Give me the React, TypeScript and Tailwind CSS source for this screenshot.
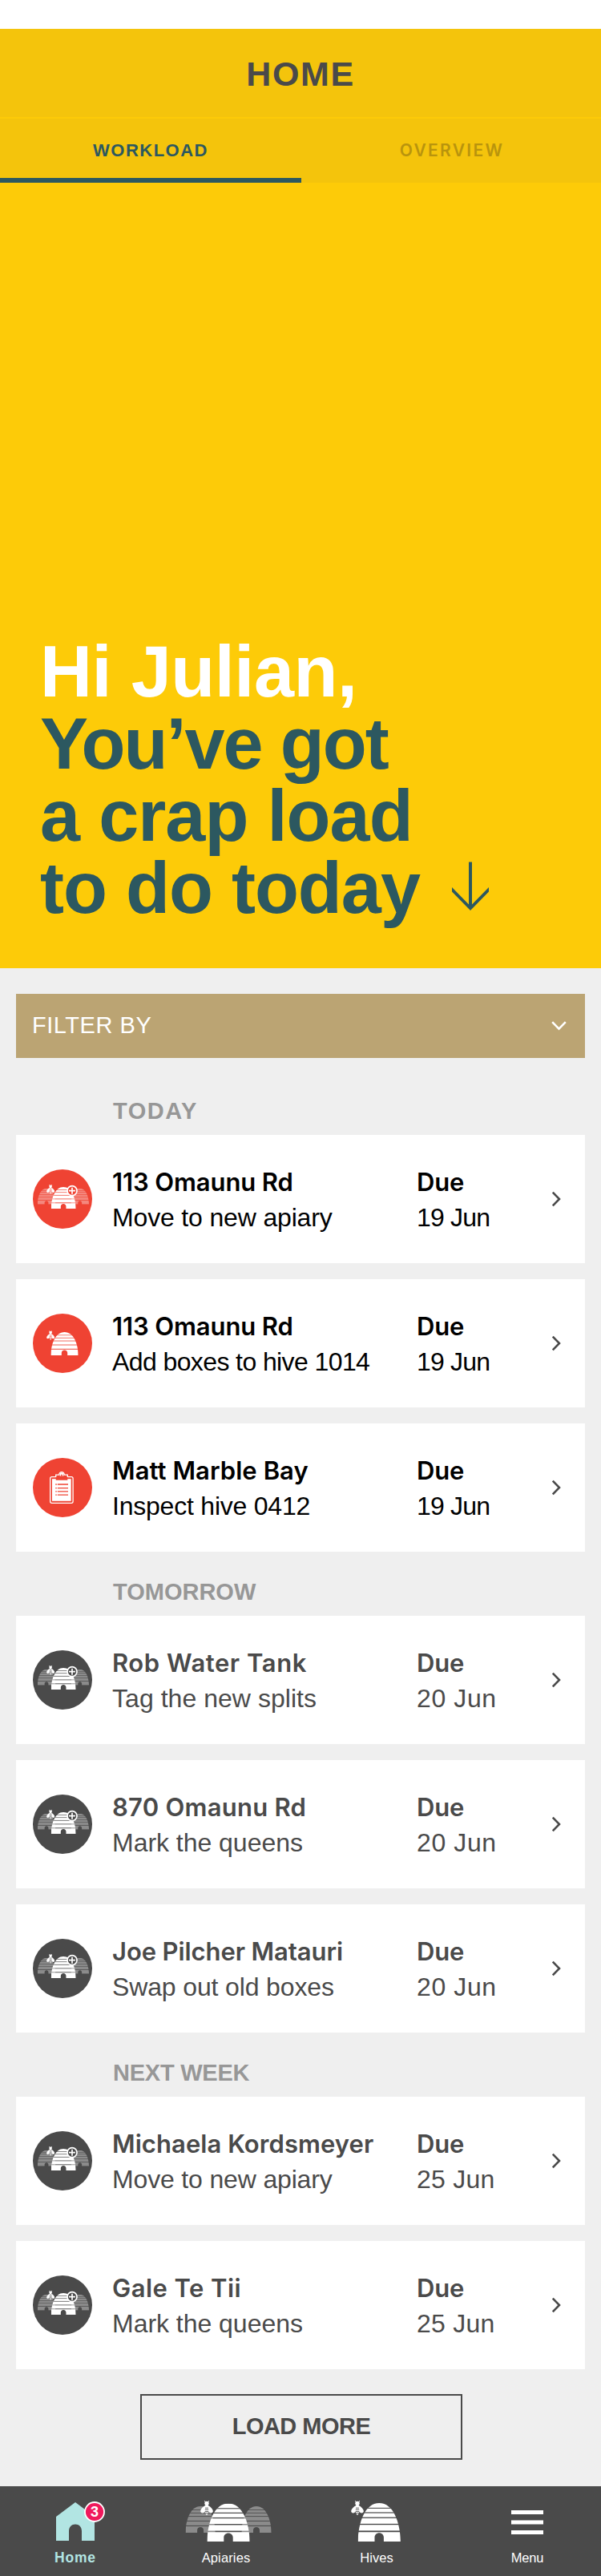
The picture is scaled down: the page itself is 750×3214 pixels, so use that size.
import React, { useId } from 'react';

type IconKind = 'apiary' | 'hive' | 'clipboard';

type Task = {
  title: string;
  titleTracking: string;
  note: string;
  noteTracking: string;
  date: string;
  dateTracking: string;
  icon: IconKind;
};

type Section = { label: string; tracking: string; urgent: boolean; tasks: Task[] };

const sections: Section[] = [
  {
    label: 'TODAY',
    tracking: 'tracking-[1.5px]',
    urgent: true,
    tasks: [
      { title: '113 Omaunu Rd', titleTracking: 'tracking-[-0.11px]', note: 'Move to new apiary', noteTracking: 'tracking-[-0.16px]', date: '19 Jun', dateTracking: 'tracking-[-0.8px]', icon: 'apiary' },
      { title: '113 Omaunu Rd', titleTracking: 'tracking-[-0.11px]', note: 'Add boxes to hive 1014', noteTracking: 'tracking-[-0.6px]', date: '19 Jun', dateTracking: 'tracking-[-0.8px]', icon: 'hive' },
      { title: 'Matt Marble Bay', titleTracking: 'tracking-[0.06px]', note: 'Inspect hive 0412', noteTracking: 'tracking-[-0.22px]', date: '19 Jun', dateTracking: 'tracking-[-0.8px]', icon: 'clipboard' },
    ],
  },
  {
    label: 'TOMORROW',
    tracking: 'tracking-[0px]',
    urgent: false,
    tasks: [
      { title: 'Rob Water Tank', titleTracking: 'tracking-[0.54px]', note: 'Tag the new splits', noteTracking: 'tracking-[0.04px]', date: '20 Jun', dateTracking: 'tracking-[0.6px]', icon: 'apiary' },
      { title: '870 Omaunu Rd', titleTracking: 'tracking-[0.24px]', note: 'Mark the queens', noteTracking: 'tracking-[-0.03px]', date: '20 Jun', dateTracking: 'tracking-[0.6px]', icon: 'apiary' },
      { title: 'Joe Pilcher Matauri', titleTracking: 'tracking-[-0.09px]', note: 'Swap out old boxes', noteTracking: 'tracking-[-0.14px]', date: '20 Jun', dateTracking: 'tracking-[0.6px]', icon: 'apiary' },
    ],
  },
  {
    label: 'NEXT WEEK',
    tracking: 'tracking-[-0.24px]',
    urgent: false,
    tasks: [
      { title: 'Michaela Kordsmeyer', titleTracking: 'tracking-[0.07px]', note: 'Move to new apiary', noteTracking: 'tracking-[-0.16px]', date: '25 Jun', dateTracking: 'tracking-[0.24px]', icon: 'apiary' },
      { title: 'Gale Te Tii', titleTracking: 'tracking-[0.45px]', note: 'Mark the queens', noteTracking: 'tracking-[-0.03px]', date: '25 Jun', dateTracking: 'tracking-[0.24px]', icon: 'apiary' },
    ],
  },
];

/* Straw skep with horizontal bands, 53.4 x 48 in its own units. */
function Hive({ x, y, sx, sy, opacity = 1 }: { x: number; y: number; sx: number; sy: number; opacity?: number }) {
  const id = useId();
  return (
    <g transform={`translate(${x} ${y}) scale(${sx} ${sy})`} fill="#fff" opacity={opacity}>
      <clipPath id={id}>
        <path d="M0 48C.6 24 9 0 26.7 0S52.8 24 53.4 48Z" />
      </clipPath>
      <g clipPath={`url(#${id})`}>
        <rect width="53.4" height="5.8" />
        <rect y="6.9" width="53.4" height="4.5" />
        <rect y="12.6" width="53.4" height="5" />
        <rect y="18.9" width="53.4" height="6.9" />
        <rect y="27.2" width="53.4" height="7.2" />
        <path d="M0 36.2H53.4V48H32.4V43C32.4 39.6 30 37.3 26.7 37.3S21 39.6 21 43V48H0Z" />
      </g>
    </g>
  );
}

/* Bee seen from above, 16 x 18 in its own units. */
function Bee({ x, y, scale = 1, bg }: { x: number; y: number; scale?: number; bg: string }) {
  return (
    <g transform={`translate(${x} ${y}) scale(${scale})`} fill="#fff">
      <path d="M5 .4 6.6 1.6M11 .4 9.4 1.6" stroke="#fff" strokeWidth="1" />
      <path d="M5.8 1.2Q8 .2 10.2 1.2L10.8 3.6Q10.6 5 9.8 5.6L10 7H6L6.2 5.6Q5.4 5 5.2 3.6Z" />
      <path d="M6.2 6C3 7.5 0 11 .2 13.6C.8 16.2 4.8 16.2 6.4 12.8Z" />
      <path d="M9.8 6C13 7.5 16 11 15.8 13.6C15.2 16.2 11.2 16.2 9.6 12.8Z" />
      <path d="M6 7H10L10.4 13.5Q10 17 8 18.2Q6 17 5.6 13.5Z" />
      <path d="M6 9.2H10M5.8 11.4H10.2M5.8 13.6H10.2M6 15.7H10" stroke={bg} strokeWidth=".9" />
    </g>
  );
}

function TaskIcon({ kind, urgent }: { kind: IconKind; urgent: boolean }) {
  const bg = urgent ? '#ef4333' : '#4a4a4a';
  return (
    <svg width="74" height="74" viewBox="0 0 74 74" className="shrink-0">
      <circle cx="37" cy="37" r="37" fill={bg} />
      {kind === 'apiary' && (
        <>
          <Hive x={5.7} y={23.7} sx={0.424} sy={0.417} opacity={0.36} />
          <Hive x={47.4} y={23.7} sx={0.424} sy={0.417} opacity={0.36} />
          <Hive x={22.6} y={22} sx={0.582} sy={0.5625} />
          <Bee x={17} y={19} scale={0.64} bg={bg} />
          <circle cx="49" cy="26.7" r="6" fill={bg} stroke="#fff" strokeWidth="1.7" />
          <path d="M49 22.7V30.7M45 26.7H53" stroke="#fff" strokeWidth="1.7" />
        </>
      )}
      {kind === 'hive' && (
        <>
          <Hive x={22.3} y={23} sx={0.644} sy={0.604} />
          <Bee x={17} y={21.3} scale={0.64} bg={bg} />
        </>
      )}
      {kind === 'clipboard' && (
        <>
          <rect x="21.7" y="23.7" width="28.4" height="32.6" rx="2" fill="none" stroke="#fff" strokeWidth="1.3" />
          <rect x="24" y="26.2" width="23.7" height="27.6" fill="#fff" />
          <path d="M28.7 27.7V21.2H32.6Q33.2 17.6 36 17.6T39.4 21.2H43.3V27.7Z" fill={bg} />
          <path
            d="M28.7 24V21.2H32.6Q33.2 17.6 36 17.6T39.4 21.2H43.3V24"
            fill="none"
            stroke="#fff"
            strokeWidth="1.3"
          />
          <path d="M33.6 22.6Q33.2 18.2 36 18.2T38.4 22.6Z" fill="#fff" />
          <rect x="35.2" y="20.7" width="1.6" height="2" fill={bg} />
          <path
            d="M28.2 33H29.8M30.8 33H44M28.2 37.6H29.8M30.8 37.6H44M28.2 41.9H29.8M30.8 41.9H44M28.2 46.1H29.8M30.8 46.1H44"
            stroke={bg}
            strokeWidth="1.3"
          />
        </>
      )}
    </svg>
  );
}

function TaskCard({ task, urgent }: { task: Task; urgent: boolean }) {
  return (
    <li className={`flex h-40 items-center bg-white pl-[21px] pr-[30px] leading-[44px] ${urgent ? 'text-black' : 'text-[#4a4a4a]'}`}>
      <TaskIcon kind={task.icon} urgent={urgent} />
      <div className="ml-[25px] w-[380px] pt-[2px] whitespace-nowrap">
        <h3 className={`font-['Inter',sans-serif] text-[31px] font-semibold ${task.titleTracking}`}>{task.title}</h3>
        <p className={`text-[32px] ${task.noteTracking}`}>{task.note}</p>
      </div>
      <div className="pt-[2px] whitespace-nowrap">
        <p className="font-['Inter',sans-serif] text-[31px] font-semibold tracking-[-0.2px]">Due</p>
        <p className={`text-[32px] ${task.dateTracking}`}>{task.date}</p>
      </div>
      <svg width="12" height="20" viewBox="0 0 12 20" className="ml-auto" fill="none" stroke="#4a4a4a" strokeWidth="2.6">
        <path d="M1.8 1.6 10 10 1.8 18.4" />
      </svg>
    </li>
  );
}

function NavItem({ label, active, children }: { label: React.ReactNode; active?: boolean; children: React.ReactNode }) {
  return (
    <a className={`flex w-[188px] shrink-0 flex-col items-center pt-[10px] ${active ? 'text-[#b2e5e3]' : 'text-white'}`}>
      <svg width="188" height="64" viewBox="0 0 188 64">
        {children}
      </svg>
      {label}
    </a>
  );
}

export default function App() {
  return (
    <div className="w-[750px] bg-[#efefef] font-['Liberation_Sans',Arial,sans-serif]">
      <div className="h-9 bg-white" />
      <header className="flex h-[110px] items-center justify-center bg-[#f4c40c] pt-[3px]">
        <h1 className="text-[43px] font-bold tracking-[1.6px] text-[#4a4a4a]">HOME</h1>
      </header>
      <nav className="flex h-[82px] border-t-2 border-[#fdcb08] bg-[#f4c40c] text-center leading-[68px]">
        <a className="w-[376px] border-b-[6px] border-[#2c5860] pt-[6px] text-[22px] font-bold tracking-[1.5px] text-[#2c5860]">WORKLOAD</a>
        <a className="flex-1 pt-[6px] pl-[2px] font-['Inter',sans-serif] text-[21px] font-semibold tracking-[2.3px] text-[#b9940d]">OVERVIEW</a>
      </nav>
      <section className="flex h-[980px] flex-col justify-end bg-[#fdcb08] px-[50px] pb-[55px] text-[90px] font-bold leading-[90px] text-[#2c5860]">
        <p className="tracking-[-0.45px] text-white">Hi Julian,</p>
        <p className="tracking-[-1.95px]">You’ve got</p>
        <p className="tracking-[-0.95px]">a crap load</p>
        <div className="flex whitespace-nowrap">
          <span className="w-[513px] tracking-[-1px]">to do today</span>
          <svg width="48" height="62" viewBox="0 0 48 62" className="mt-[12px]" fill="#2c5860">
            <path d="M22 .5h4V56h-4z" />
            <path d="M1 32 24 55.5 47 32V37.5L24 61 1 37.5Z" />
          </svg>
        </div>
      </section>
      <main className="flex flex-col px-5 pt-8">
        <button className="mb-4 flex h-20 items-center justify-between bg-[#bba473] pl-[20px] pr-[23px] text-[29px] tracking-[0.54px] text-white">
          FILTER BY
          <svg width="19" height="12" viewBox="0 0 19 12" fill="none" stroke="#fff" strokeWidth="2.6" className="-mt-[1px]">
            <path d="M1.2 1.2 9.5 9.6 17.8 1.2" />
          </svg>
        </button>
        {sections.map((s) => (
          <section key={s.label}>
            <h2 className={`h-20 pl-[121px] pt-[30px] text-[29px] font-bold leading-[40px] text-[#979797] ${s.tracking}`}>{s.label}</h2>
            <ul className="flex flex-col gap-5">
              {s.tasks.map((t, i) => (
                <TaskCard key={i} task={t} urgent={s.urgent} />
              ))}
            </ul>
          </section>
        ))}
        <button className="mt-[31px] mb-[33px] ml-[155px] h-[82px] w-[402px] border-2 border-[#4a4a4a] text-[29px] font-bold tracking-[-0.52px] text-[#4a4a4a]">
          LOAD MORE
        </button>
      </main>
      <footer className="flex h-28 overflow-hidden bg-[#4a4a4a] text-[16.5px] leading-6">
        <NavItem active label={<span className="mt-[3px] text-[17.5px] font-bold tracking-[0.8px]">Home</span>}>
          <path d="M94 10 118 28V58H102V46C102 40.8 98.6 37.5 94 37.5S86 40.8 86 46V58H70V28Z" fill="#b2e5e3" />
          <circle cx="118" cy="22" r="12" fill="#f0185c" stroke="#fff" strokeWidth="1.8" />
          <text x="118" y="28.3" textAnchor="middle" fill="#fff" fontSize="18" fontWeight="700">
            3
          </text>
        </NavItem>
        <NavItem label={<span className="mt-[3px] tracking-[0.13px]">Apiaries</span>}>
          <Hive x={43.4} y={15} sx={0.7} sy={0.694} opacity={0.36} />
          <Hive x={113.3} y={15} sx={0.7} sy={0.694} opacity={0.36} />
          <Hive x={70.3} y={11.5} sx={1} sy={0.99} />
          <Bee x={62} y={8} bg="#4a4a4a" />
        </NavItem>
        <NavItem label={<span className="mt-[3px] tracking-[0.07px]">Hives</span>}>
          <Hive x={70.5} y={11} sx={1} sy={1} />
          <Bee x={62} y={8} bg="#4a4a4a" />
        </NavItem>
        <NavItem label={<span className="mt-[3px] tracking-[-0.2px]">Menu</span>}>
          <path d="M74 20h40v5h-40zM74 32.5h40v5h-40zM74 45h40v5h-40z" fill="#fff" />
        </NavItem>
      </footer>
    </div>
  );
}
